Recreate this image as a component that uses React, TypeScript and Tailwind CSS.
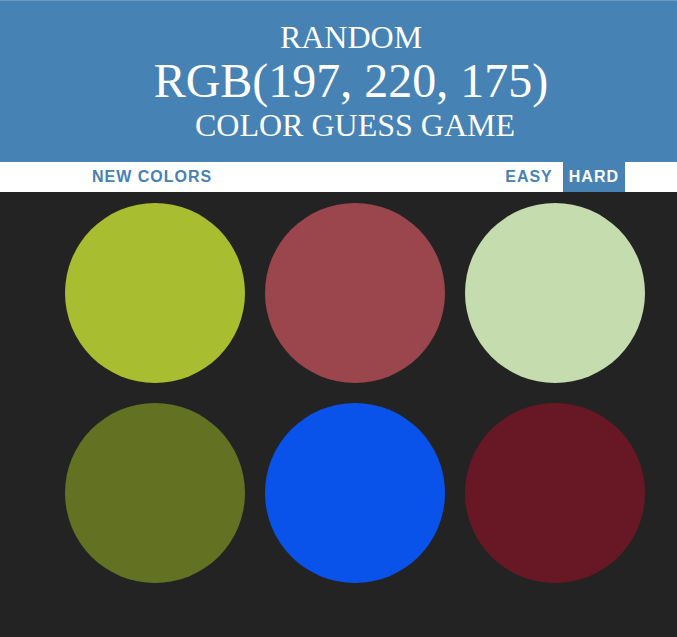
import React from "react";

const colors = [
  "#a9bd30",
  "#9a464c",
  "#c5dcaf",
  "#637123",
  "#0a53ea",
  "#681824",
];

export default function App() {
  return (
    <div className="w-[677px] h-[637px] overflow-hidden bg-[#232323] flex flex-col">
      <header
        className="h-[162px] shrink-0 bg-[#4682b4] border-t border-[#6d9ac4] pt-[19px] pl-[25px] text-white text-center uppercase"
        style={{ fontFamily: '"Liberation Serif", "Times New Roman", serif' }}
      >
        <div className="text-[32px] leading-[1.1]">Random</div>
        <div className="text-[48px] leading-[1.1]">RGB(197, 220, 175)</div>
        <div className="text-[32px] leading-[1.1] pl-[8px]">Color Guess Game</div>
      </header>
      <nav
        className="h-[30px] shrink-0 bg-white flex items-stretch pl-[86px] pr-[52px] text-[16px] font-bold tracking-[1px] uppercase"
        style={{ fontFamily: '"Liberation Sans", Arial, sans-serif' }}
      >
        <button className="px-[6px] text-[#4682b4] uppercase">New Colors</button>
        <div className="ml-auto flex items-stretch gap-[4px]">
          <button className="px-[6px] text-[#4682b4] uppercase">Easy</button>
          <button className="px-[6px] bg-[#4682b4] text-white uppercase">Hard</button>
        </div>
      </nav>
      <main className="pt-[11px] pl-[65px]">
        <div className="grid grid-cols-[180px_180px_180px] gap-[20px]">
          {colors.map((c, i) => (
            <div
              key={i}
              className="w-[180px] h-[180px] rounded-full"
              style={{ backgroundColor: c }}
            />
          ))}
        </div>
      </main>
    </div>
  );
}
